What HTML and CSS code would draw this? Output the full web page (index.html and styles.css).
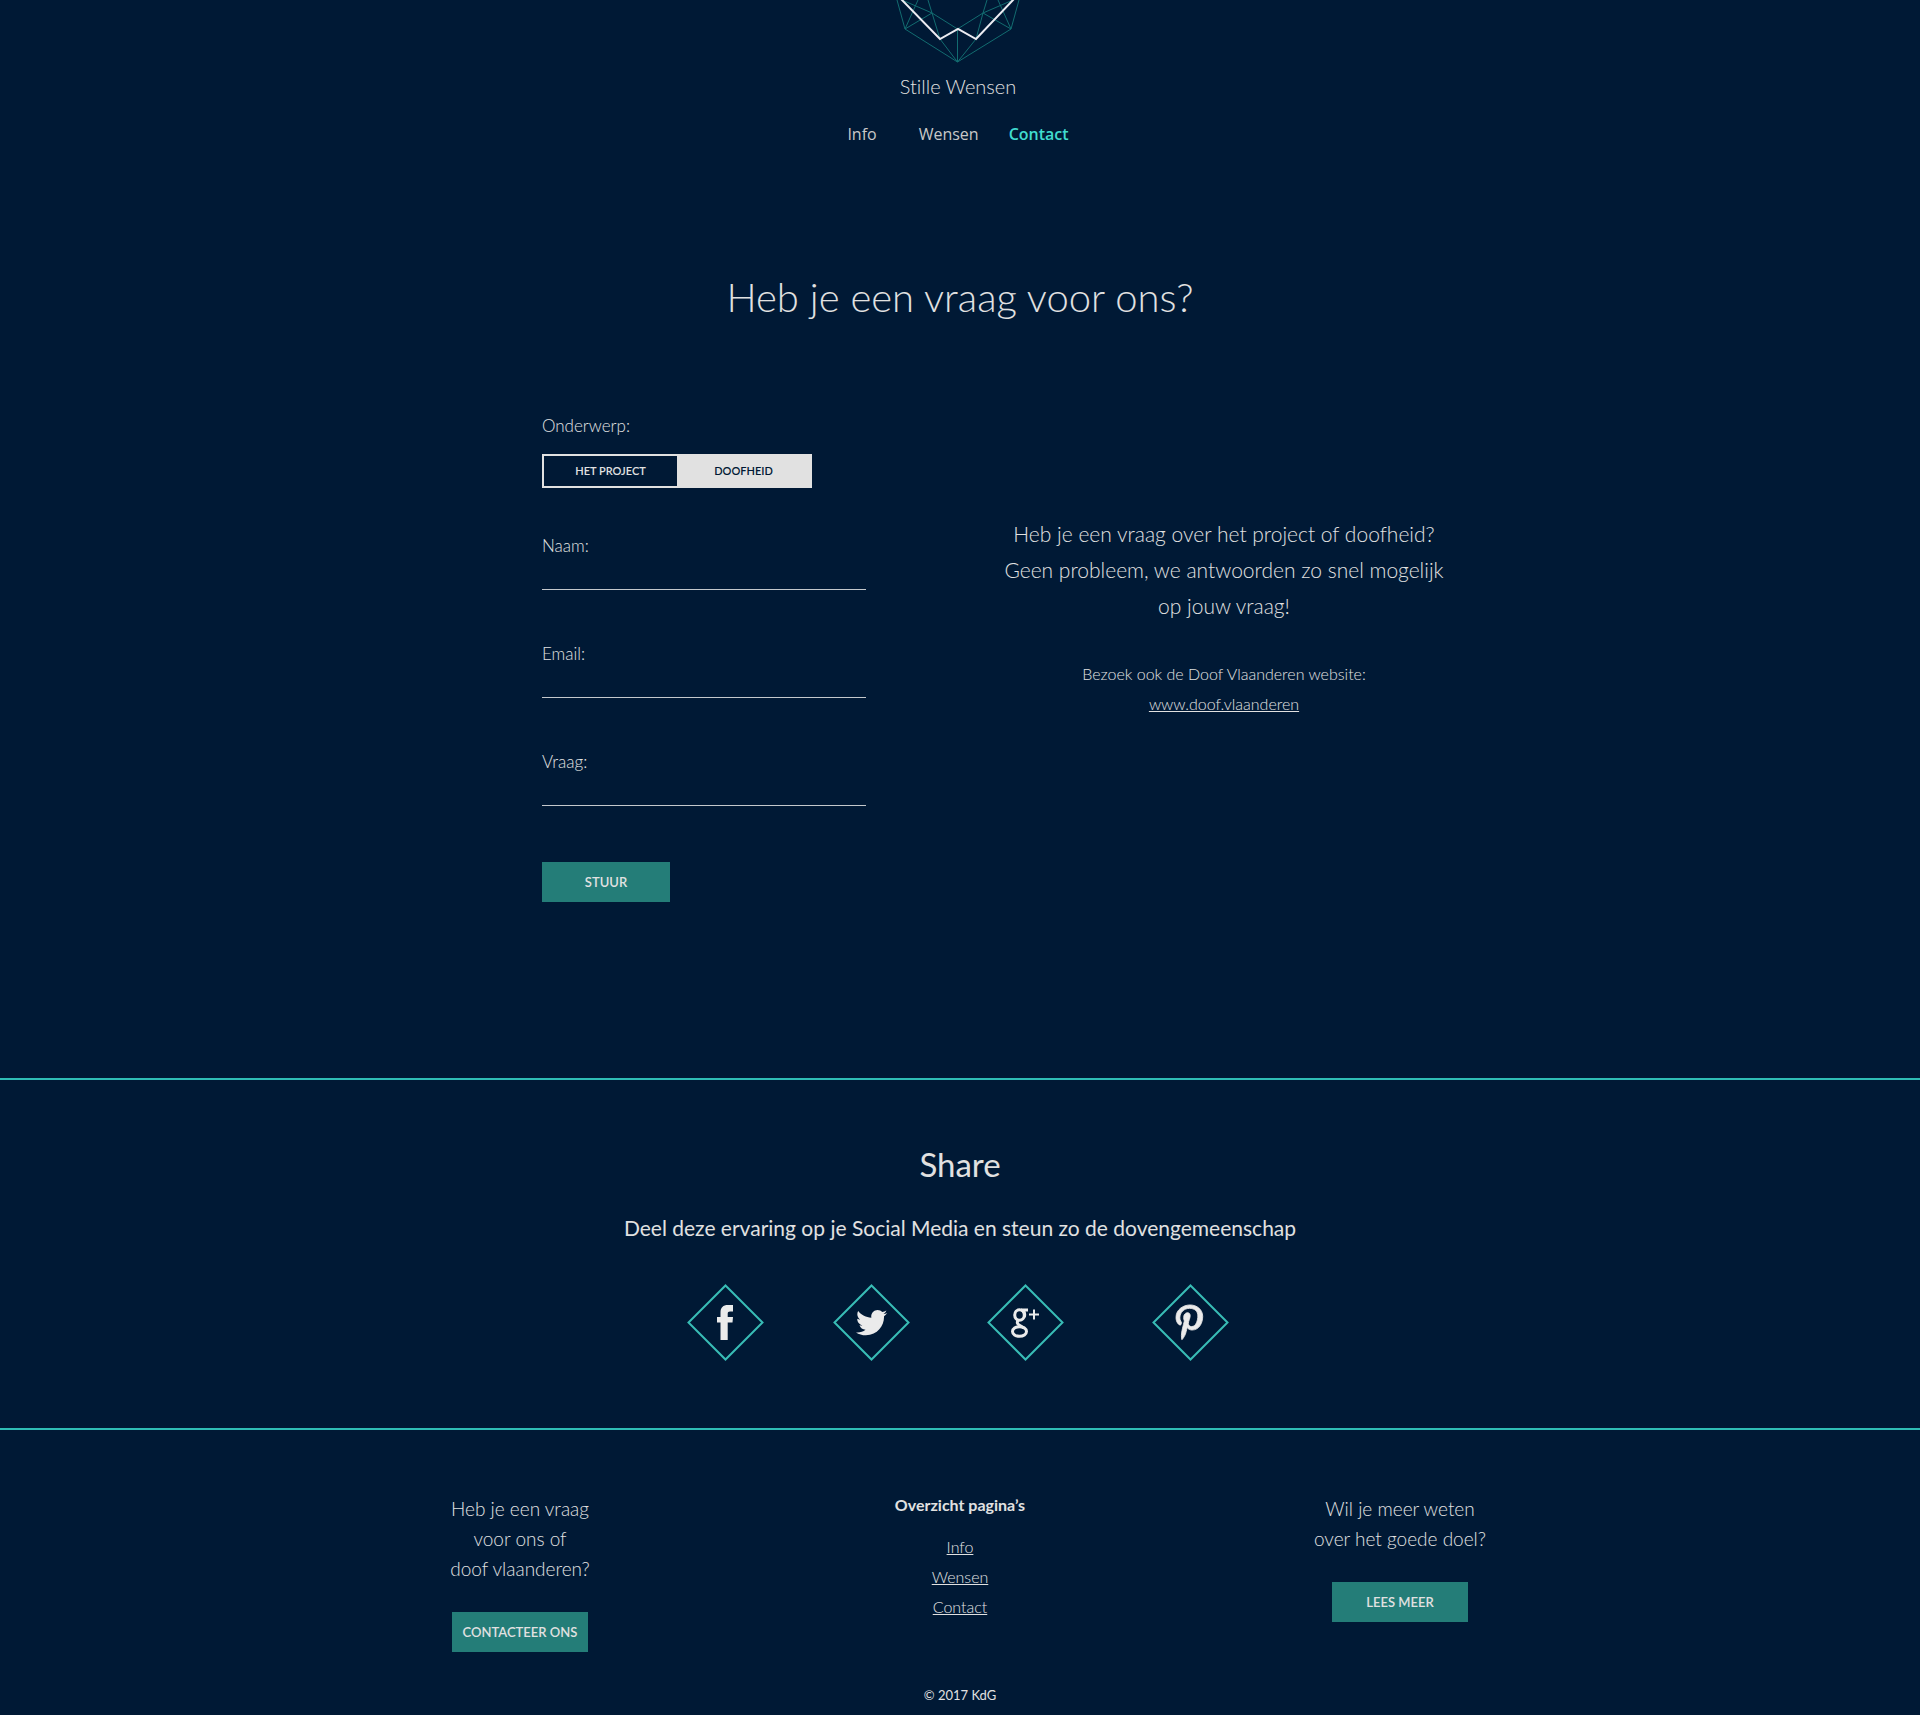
FILE: index.html
```html
<!DOCTYPE html>
<html lang="nl">
<head>
<meta charset="utf-8">
<meta name="viewport" content="width=device-width, initial-scale=1">
<title>Stille Wensen – Contact</title>
<link rel="stylesheet" href="styles.css">
</head>
<body>
<header class="header">
  <svg class="logo" viewBox="0 0 124 64" aria-hidden="true">
    <g class="logo-mesh">
      <path d="M1 0 9 29 61.500 62 115 29 123 0M61.500 29V62M44 39 61.500 62 80 39M6 0 36 13 61.500 29 87 13 117 0M22 0 9 29 36 13 44 39M32 0 36 13M102 0 115 29 87 13 80 39M91 0 87 13"/>
    </g>
    <path class="logo-heart" d="M5-1 44 39 62 29 80 39 118-1"/>
  </svg>
  <p class="brand">Stille Wensen</p>
  <nav class="nav">
    <a href="#info">Info</a>
    <a href="#wensen">Wensen</a>
    <a class="current" href="#contact" aria-current="page">Contact</a>
  </nav>
</header>

<main>
  <h1 class="title">Heb je een vraag voor ons?</h1>
  <div class="contact">
    <form class="form">
      <fieldset class="topic">
        <legend>Onderwerp:</legend>
        <div class="toggle">
          <label><input type="radio" name="topic" checked><span>HET PROJECT</span></label>
          <label><input type="radio" name="topic"><span>DOOFHEID</span></label>
        </div>
      </fieldset>
      <div class="field"><label for="naam">Naam:</label><input id="naam" type="text"></div>
      <div class="field"><label for="email">Email:</label><input id="email" type="email"></div>
      <div class="field"><label for="vraag">Vraag:</label><input id="vraag" type="text"></div>
      <button class="button send" type="submit">STUUR</button>
    </form>
    <div class="intro">
      <p class="lead">Heb je een vraag over het project of doofheid?<br>Geen probleem, we antwoorden zo snel mogelijk<br>op jouw vraag!</p>
      <p class="visit">Bezoek ook de Doof Vlaanderen website:<br><a href="#doof">www.doof.vlaanderen</a></p>
    </div>
  </div>
</main>

<section class="share">
  <h2>Share</h2>
  <p>Deel deze ervaring op je Social Media en steun zo de dovengemeenschap</p>
  <div class="social">
    <a href="#facebook" aria-label="Facebook"><svg viewBox="0 0 77 77"><path class="diamond" d="M38.500 1.500 75.500 38.500 38.500 75.500 1.500 38.500Z"/><path d="M33.500 56V38.500H30V33h3.500V28.500C33.500 23.500 36 21 41 21h5v6.500h-3c-1.500 0-2.300.8-2.300 2.300V33H46l-.5 5.500h-4.800V56Z"/></svg></a>
    <a href="#twitter" aria-label="Twitter"><svg viewBox="0 0 77 77"><path class="diamond" d="M38.500 1.500 75.500 38.500 38.500 75.500 1.500 38.500Z"/><path transform="translate(23 23) scale(.061)" d="M459.370 151.716c.325 4.548.325 9.097.325 13.645 0 138.720-105.583 298.558-298.558 298.558-59.452 0-114.680-17.219-161.137-47.106 8.447.974 16.568 1.299 25.340 1.299 49.055 0 94.213-16.568 130.274-44.832-46.132-.975-84.792-31.188-98.112-72.772 6.498.974 12.995 1.624 19.818 1.624 9.421 0 18.843-1.300 27.614-3.573-48.081-9.747-84.143-51.980-84.143-102.985v-1.299c13.969 7.797 30.214 12.670 47.431 13.319-28.264-18.843-46.781-51.005-46.781-87.391 0-19.492 5.197-37.360 14.294-52.954 51.655 63.675 129.300 105.258 216.365 109.807-1.624-7.797-2.599-15.918-2.599-24.040 0-57.828 46.782-104.934 104.934-104.934 30.213 0 57.502 12.670 76.670 33.137 23.715-4.548 46.456-13.320 66.599-25.340-7.798 24.366-24.366 44.833-46.132 57.827 21.117-2.273 41.584-8.122 60.426-16.243-14.292 20.791-32.161 39.308-52.628 54.253z"/></svg></a>
    <a href="#google" aria-label="Google+"><svg viewBox="0 0 77 77"><path class="diamond" d="M38.500 1.500 75.500 38.500 38.500 75.500 1.500 38.500Z"/><g class="gplus"><ellipse cx="32.500" cy="31" rx="4.800" ry="5.300"/><ellipse cx="32.500" cy="47.500" rx="7" ry="4.800"/><path d="M34 26H41M36 27Q38.500 29 37.300 33M31 36.500Q29 39.500 33 41.500L37 44"/></g><path class="plus" d="M47 25.500v10M42 30.500H52"/></svg></a>
    <a href="#pinterest" aria-label="Pinterest"><svg viewBox="0 0 77 77"><path class="diamond" d="M38.500 1.500 75.500 38.500 38.500 75.500 1.500 38.500Z"/><path class="pin" transform="translate(24 20.500) scale(.0695)" d="M204 6.500C101.400 6.500 0 74.900 0 185.600 0 256 39.600 296 63.600 296c9.900 0 15.600-27.600 15.600-35.400 0-9.300-23.700-29.100-23.700-67.800 0-80.400 61.200-137.400 140.400-137.400 68.100 0 118.500 38.700 118.500 109.800 0 53.100-21.300 152.700-90.300 152.700-24.900 0-46.200-18-46.200-43.800 0-37.800 26.400-74.400 26.400-113.400 0-66.200-93.900-54.200-93.900 25.800 0 16.800 2.100 35.400 9.600 50.700-13.800 59.400-42 147.900-42 209.100 0 18.900 2.700 37.500 4.500 56.400 3.400 3.800 1.700 3.400 6.900 1.500 50.400-69 48.600-82.500 71.400-172.800 12.300 23.400 44.100 36 69.300 36 106.200 0 153.900-103.500 153.900-196.800C384 71.300 298.200 6.500 204 6.500z"/></svg></a>
  </div>
</section>

<footer class="footer">
  <div class="columns">
    <div class="column">
      <p>Heb je een vraag<br>voor ons of<br>doof vlaanderen?</p>
      <button class="button" type="button">CONTACTEER ONS</button>
    </div>
    <nav class="pages">
      <h3>Overzicht pagina’s</h3>
      <a href="#info">Info</a>
      <a href="#wensen">Wensen</a>
      <a href="#contact">Contact</a>
    </nav>
    <div class="column">
      <p>Wil je meer weten<br>over het goede doel?</p>
      <button class="button" type="button">LEES MEER</button>
    </div>
  </div>
  <p class="copyright">© 2017 KdG</p>
</footer>
</body>
</html>
```
FILE: styles.css
```css
:root {
  --navy: #001935;
  --light: #e1e1e1;
  --teal: #247d78;
  --aqua: #2fbdb5;
}

* { box-sizing: border-box; }

body {
  margin: 0;
  background: var(--navy);
  color: var(--light);
  font-family: Lato, "Open Sans", sans-serif;
  font-weight: 300;
  font-variant-ligatures: none;
}

h1, h2, h3, p, fieldset { margin: 0; padding: 0; }
a { color: inherit; }
input, button { font: inherit; color: inherit; }

.header {
  display: flex;
  flex-direction: column;
  align-items: center;
  padding-right: 4px;
}
.logo { width: 124px; height: 64px; }
.logo-mesh { fill: none; stroke: #126c70; stroke-width: 1; }
.logo-heart { fill: none; stroke: #ececf2; stroke-width: 2; }
.brand { margin-top: 6px; font-size: 20px; line-height: 32px; }

.nav {
  display: flex;
  gap: 30px;
  margin-top: 20px;
  font: 400 16px/24px "Open Sans", sans-serif;
  color: #c8c8c8;
}
.nav a { text-decoration: none; }
.nav a:first-child { margin-right: 12px; }
.nav .current { color: #40dcd0; font-weight: 600; }

.title {
  margin-top: 121px;
  text-align: center;
  font-size: 40px;
  font-weight: 300;
  line-height: 60px;
}

.contact {
  display: grid;
  grid-template-columns: 324px 472px;
  justify-content: space-between;
  max-width: 1000px;
  margin: 87px auto 0;
  padding: 0 0 176px 82px;
}
.form { font-size: 17px; line-height: 24px; }
.topic { border: 0; min-width: 0; margin-bottom: 46px; }
.topic legend { padding: 0; margin-bottom: 16px; }
.toggle {
  display: flex;
  width: 270px;
  height: 34px;
  border: 2px solid var(--light);
  background: var(--light);
}
.toggle label { flex: 1; display: flex; }
.toggle input { appearance: none; width: 0; margin: 0; }
.toggle span {
  flex: 1;
  color: var(--navy);
  font-size: 11px;
  font-weight: 600;
  line-height: 30px;
  text-align: center;
}
.toggle input:checked + span { background: var(--navy); color: var(--light); }

.field { display: flex; flex-direction: column; margin-bottom: 52px; }
.field input {
  height: 32px;
  padding: 0;
  border: 0;
  border-bottom: 1px solid #c4c8cc;
  background: none;
}

.button {
  width: 136px;
  height: 40px;
  padding: 0;
  border: 0;
  background: var(--teal);
  color: var(--light);
  font-size: 13px;
  font-weight: 600;
}
.send { display: block; width: 128px; margin-top: 56px; }

.intro { padding-top: 102px; text-align: center; }
.lead { font-size: 21px; line-height: 36px; }
.visit { margin-top: 35px; font-size: 16px; line-height: 30px; }

.share {
  border: solid var(--aqua);
  border-width: 2px 0;
  padding: 60px 0 67px;
  text-align: center;
}
.share h2 { font-size: 33px; font-weight: 400; line-height: 48px; }
.share p { margin-top: 22px; font-size: 21px; font-weight: 400; line-height: 36px; }
.social {
  display: grid;
  grid-template-columns: 146px 154px 165px 77px;
  justify-content: center;
  margin-top: 38px;
  padding-right: 4px;
}
.social a { width: 77px; height: 77px; }
.social svg { display: block; fill: #ebebeb; }
.social .diamond { fill: none; stroke: #38bdb6; stroke-width: 2; }
.social .pin { stroke: #ebebeb; stroke-width: 12; }
.gplus { fill: none; stroke: #ebebeb; stroke-width: 3; }
.plus { fill: none; stroke: #ebebeb; stroke-width: 2; }

.footer { padding: 60px 0 10px; text-align: center; }
.columns {
  display: grid;
  grid-template-columns: repeat(3, 1fr);
  max-width: 1320px;
  margin: 0 auto;
}
.column { padding-top: 4px; }
.column p { margin-bottom: 28px; font-size: 19px; line-height: 30px; }
.column .button { display: block; margin: 0 auto; }
.pages {
  display: flex;
  flex-direction: column;
  align-items: center;
  font-size: 16px;
  line-height: 30px;
}
.pages h3 { margin-bottom: 12px; font-size: 16px; font-weight: 700; }
.copyright { margin-top: 33px; font-size: 13px; font-weight: 400; line-height: 20px; }
```
